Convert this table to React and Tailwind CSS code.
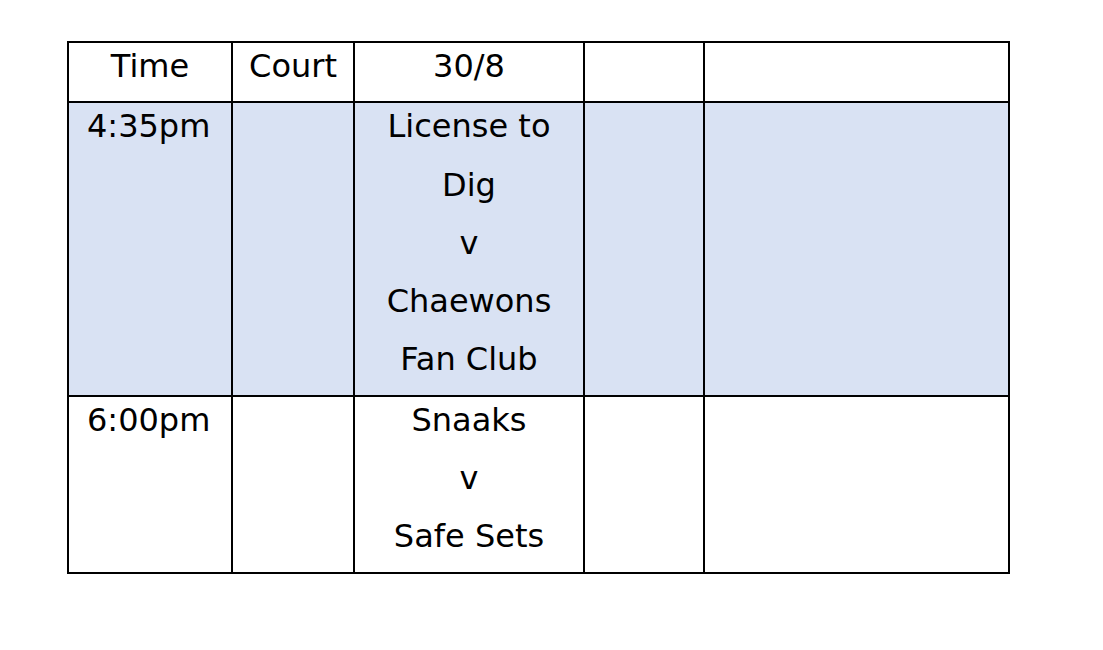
export default function App() {
  const Cell = ({ lines = [], align = "center", bg = "" }) => (
    <td className={`border-2 border-black p-0 align-top ${bg}`}>
      {lines.map((l, i) => (
        <div key={i} className={`h-[58.3px] leading-[47px] ${align === "left" ? "text-left pl-[18px]" : "text-center"}`}>{l}</div>
      ))}
    </td>
  );
  const blue = "bg-[#d9e2f3]";
  return (
    <div className="w-[1103px] h-[650px] bg-white pt-[41px] pl-[67px]" style={{ fontFamily: '"DejaVu Sans", Verdana, sans-serif' }}>
      <table className="border-collapse table-fixed text-[32px] text-black w-[941px]">
        <colgroup>
          <col className="w-[164px]" />
          <col className="w-[122px]" />
          <col className="w-[230px]" />
          <col className="w-[120px]" />
          <col className="w-[305px]" />
        </colgroup>
        <tbody>
          <tr>
            <Cell lines={["Time"]} />
            <Cell lines={["Court"]} />
            <Cell lines={["30/8"]} />
            <Cell lines={[""]} />
            <Cell lines={[""]} />
          </tr>
          <tr>
            <Cell lines={["4:35pm"]} align="left" bg={blue} />
            <Cell bg={blue} />
            <Cell lines={["License to", "Dig", "v", "Chaewons", "Fan Club"]} bg={blue} />
            <Cell bg={blue} />
            <Cell bg={blue} />
          </tr>
          <tr>
            <Cell lines={["6:00pm"]} align="left" />
            <Cell />
            <Cell lines={["Snaaks", "v", "Safe Sets"]} />
            <Cell />
            <Cell />
          </tr>
        </tbody>
      </table>
    </div>
  );
}
